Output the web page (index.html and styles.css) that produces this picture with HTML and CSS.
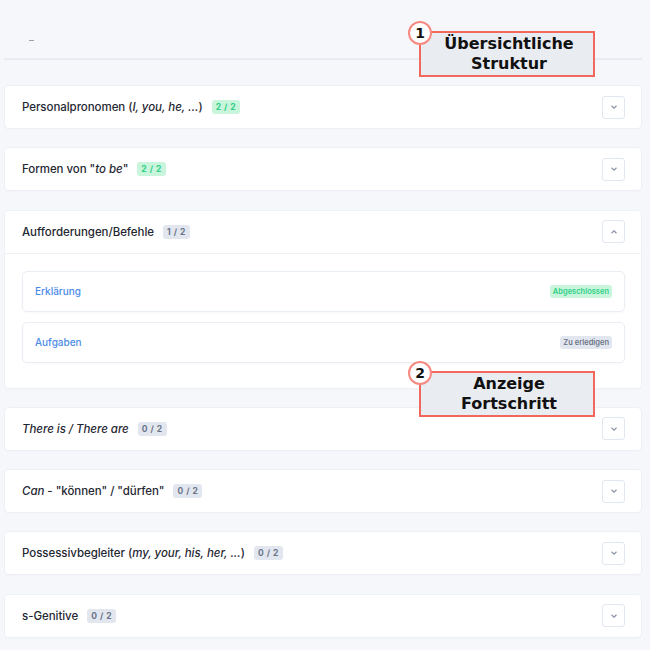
FILE: index.html
```html
<!DOCTYPE html>
<html lang="de">
<head>
<meta charset="utf-8">
<link rel="stylesheet" href="styles.css">
</head>
<body>
<div class="page">
  <div class="header"><span class="dash"></span></div>
  <div class="list">
    <div class="card">
      <div class="card-head">
        <span class="title">Personalpronomen (<i>I, you, he, ...</i>)</span>
        <span class="badge done">2 / 2</span>
        <span class="toggle"><svg width="8" height="6" viewBox="0 0 8 6"><path d="M1.5 1.8 L4 4.2 L6.5 1.8" fill="none" stroke="#8a93a6" stroke-width="1.2"/></svg></span>
      </div>
    </div>
    <div class="card">
      <div class="card-head">
        <span class="title">Formen von "<i>to be</i>"</span>
        <span class="badge done">2 / 2</span>
        <span class="toggle"><svg width="8" height="6" viewBox="0 0 8 6"><path d="M1.5 1.8 L4 4.2 L6.5 1.8" fill="none" stroke="#8a93a6" stroke-width="1.2"/></svg></span>
      </div>
    </div>
    <div class="card open">
      <div class="card-head">
        <span class="title">Aufforderungen/Befehle</span>
        <span class="badge todo">1 / 2</span>
        <span class="toggle"><svg width="8" height="6" viewBox="0 0 8 6"><path d="M1.5 4.2 L4 1.8 L6.5 4.2" fill="none" stroke="#8a93a6" stroke-width="1.2"/></svg></span>
      </div>
      <div class="card-body">
        <div class="item">
          <span class="item-title">Erklärung</span>
          <span class="status done">Abgeschlossen</span>
        </div>
        <div class="item">
          <span class="item-title">Aufgaben</span>
          <span class="status todo">Zu erledigen</span>
        </div>
      </div>
    </div>
    <div class="card">
      <div class="card-head">
        <span class="title"><i>There is / There are</i></span>
        <span class="badge todo">0 / 2</span>
        <span class="toggle"><svg width="8" height="6" viewBox="0 0 8 6"><path d="M1.5 1.8 L4 4.2 L6.5 1.8" fill="none" stroke="#8a93a6" stroke-width="1.2"/></svg></span>
      </div>
    </div>
    <div class="card">
      <div class="card-head">
        <span class="title"><i>Can</i> - "können" / "dürfen"</span>
        <span class="badge todo">0 / 2</span>
        <span class="toggle"><svg width="8" height="6" viewBox="0 0 8 6"><path d="M1.5 1.8 L4 4.2 L6.5 1.8" fill="none" stroke="#8a93a6" stroke-width="1.2"/></svg></span>
      </div>
    </div>
    <div class="card">
      <div class="card-head">
        <span class="title">Possessivbegleiter (<i>my, your, his, her, ...</i>)</span>
        <span class="badge todo">0 / 2</span>
        <span class="toggle"><svg width="8" height="6" viewBox="0 0 8 6"><path d="M1.5 1.8 L4 4.2 L6.5 1.8" fill="none" stroke="#8a93a6" stroke-width="1.2"/></svg></span>
      </div>
    </div>
    <div class="card">
      <div class="card-head">
        <span class="title">s-Genitive</span>
        <span class="badge todo">0 / 2</span>
        <span class="toggle"><svg width="8" height="6" viewBox="0 0 8 6"><path d="M1.5 1.8 L4 4.2 L6.5 1.8" fill="none" stroke="#8a93a6" stroke-width="1.2"/></svg></span>
      </div>
    </div>
  </div>

  <div class="note note-1">
    <span class="note-num">1</span>
    <span class="note-text">Übersichtliche<br>Struktur</span>
  </div>
  <div class="note note-2">
    <span class="note-num">2</span>
    <span class="note-text">Anzeige<br>Fortschritt</span>
  </div>
</div>
</body>
</html>
```
FILE: styles.css
```css
html, body {
  margin: 0;
  padding: 0;
  background: #f6f7fb;
}
body {
  font-family: Inter, Lato, sans-serif;
  color: #1f2733;
}
.page {
  position: relative;
  width: 650px;
  height: 650px;
  overflow: hidden;
}
.header {
  height: 58px;
  margin: 0 8px 0 4px;
  border-bottom: 2px solid #e8ecf2;
  position: relative;
}
.dash {
  position: absolute;
  left: 25px;
  top: 40px;
  width: 5px;
  height: 1px;
  background: #9aa1ad;
}
.list {
  padding: 26px 0 0 5px;
  width: 636px;
}
.card {
  background: #fff;
  border-radius: 4px;
  box-shadow: 0 0 0 1px #edf0f5, 0 1px 2px rgba(30, 40, 70, 0.05);
  margin-bottom: 20.3px;
}
.card-head {
  height: 42px;
  display: flex;
  align-items: center;
  padding: 0 16px 0 17px;
}
.title {
  font-size: 11.5px;
  font-weight: 500;
  letter-spacing: -0.05px;
}
.title i {
  font-style: italic;
}
.badge {
  margin-left: 9px;
  font-size: 8.5px;
  font-weight: 700;
  letter-spacing: 0.5px;
  padding: 2px 4px;
  border-radius: 3px;
  line-height: 10px;
}
.badge.done {
  background: #c8f5dc;
  color: #2fcf86;
}
.badge.todo {
  background: #e2e7ef;
  color: #6b7488;
}
.toggle {
  margin-left: auto;
  width: 21px;
  height: 21px;
  border: 1px solid #e1e7ef;
  border-radius: 3px;
  display: flex;
  align-items: center;
  justify-content: center;
  background: #fff;
}
.card.open .card-head {
  border-bottom: 1px solid #eef1f6;
}
.card-body {
  padding: 17px 16px 25px 17px;
  display: flex;
  flex-direction: column;
  gap: 10px;
}
.item {
  height: 39px;
  border: 1px solid #e9edf4;
  border-radius: 5px;
  display: flex;
  align-items: center;
  padding: 0 12px;
  box-shadow: 0 1px 2px rgba(30, 40, 70, 0.03);
}
.item-title {
  font-size: 10px;
  font-weight: 500;
  color: #4a8be8;
}
.status {
  margin-left: auto;
  font-size: 7.5px;
  font-weight: 600;
  padding: 2px 3px;
  border-radius: 3px;
  line-height: 9px;
}
.status.done {
  background: #c8f5dc;
  color: #2fcf86;
}
.status.todo {
  background: #e2e7ef;
  color: #6b7488;
}
.note {
  position: absolute;
  left: 419px;
  width: 172px;
  height: 42px;
  background: #e9ecf1;
  border: 2px solid #f2685c;
  display: flex;
  align-items: center;
  justify-content: center;
}
.note-1 { top: 31px; }
.note-2 { top: 371px; }
.note-num {
  position: absolute;
  left: -13px;
  top: -12px;
  width: 20px;
  height: 20px;
  border: 2px solid #f58a80;
  border-radius: 50%;
  background: #fff;
  font-family: "DejaVu Sans", sans-serif;
  font-weight: 700;
  font-size: 14px;
  line-height: 20px;
  text-align: center;
  color: #111;
}
.note-text {
  font-family: "DejaVu Sans", sans-serif;
  font-weight: 700;
  font-size: 16px;
  line-height: 20px;
  text-align: center;
  color: #111;
  margin-left: 4px;
}
```
